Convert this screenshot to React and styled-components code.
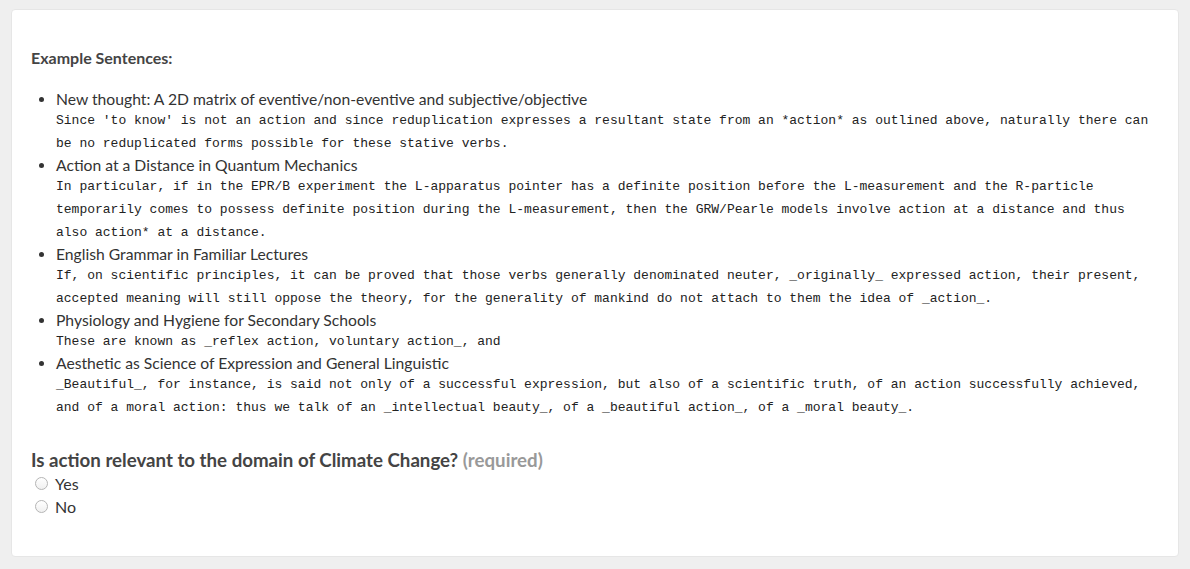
import React from "react";
import styled, { createGlobalStyle } from "styled-components";

const Global = createGlobalStyle`
  html, body { margin: 0; padding: 0; }
  body {
    background: #efefef;
    font-family: Lato, "Open Sans", sans-serif;
    color: #333;
  }
`;

const Page = styled.div`
  padding: 9px 11px 11px 11px;
`;

const Card = styled.section`
  background: #fff;
  border: 1px solid #e6e6e6;
  border-radius: 4px;
  padding: 38px 19px 38px 19px;
`;

const Heading = styled.h4`
  margin: 0 0 21px 0;
  font-size: 16px;
  line-height: 20px;
  font-weight: 700;
  color: #444;
`;

const List = styled.ul`
  margin: 0;
  padding: 0 0 0 25px;
  list-style: disc;
`;

const Item = styled.li`
  &::marker { color: #333; font-size: 15px; }
`;

const Title = styled.div`
  font-size: 15.7px;
  line-height: 20px;
  color: #333;
`;

const Sentence = styled.div`
  font-family: "Liberation Mono", "Courier New", monospace;
  font-size: 13px;
  line-height: 23px;
  color: #222;
`;

const Question = styled.div`
  margin-top: 29px;
  font-size: 18.7px;
  line-height: 24px;
  font-weight: 700;
  color: #444;
`;

const Required = styled.span`
  color: #999;
`;

const Option = styled.label`
  display: flex;
  align-items: center;
  gap: 7px;
  height: 23px;
  padding-left: 4px;
  font-size: 16px;
  color: #333;
`;

const Radio = styled.input.attrs({ type: "radio" })`
  appearance: none;
  margin: 0;
  width: 13px;
  height: 13px;
  border-radius: 50%;
  border: 1px solid #b5b5b5;
  background: linear-gradient(#fff, #f0f0f0);
  box-sizing: border-box;
`;

const items = [
  {
    title: "New thought: A 2D matrix of eventive/non-eventive and subjective/objective",
    text: "Since 'to know' is not an action and since reduplication expresses a resultant state from an *action* as outlined above, naturally there can be no reduplicated forms possible for these stative verbs.",
  },
  {
    title: "Action at a Distance in Quantum Mechanics",
    text: "In particular, if in the EPR/B experiment the L-apparatus pointer has a definite position before the L-measurement and the R-particle temporarily comes to possess definite position during the L-measurement, then the GRW/Pearle models involve action at a distance and thus also action* at a distance.",
  },
  {
    title: "English Grammar in Familiar Lectures",
    text: "If, on scientific principles, it can be proved that those verbs generally denominated neuter, _originally_ expressed action, their present, accepted meaning will still oppose the theory, for the generality of mankind do not attach to them the idea of _action_.",
  },
  {
    title: "Physiology and Hygiene for Secondary Schools",
    text: "These are known as _reflex action, voluntary action_, and",
  },
  {
    title: "Aesthetic as Science of Expression and General Linguistic",
    text: "_Beautiful_, for instance, is said not only of a successful expression, but also of a scientific truth, of an action successfully achieved, and of a moral action: thus we talk of an _intellectual beauty_, of a _beautiful action_, of a _moral beauty_.",
  },
];

export default function App() {
  return (
    <>
      <Global />
      <Page>
        <Card>
          <Heading>Example Sentences:</Heading>
          <List>
            {items.map((it) => (
              <Item key={it.title}>
                <Title>{it.title}</Title>
                <Sentence>{it.text}</Sentence>
              </Item>
            ))}
          </List>
          <Question>
            Is action relevant to the domain of Climate Change? <Required>(required)</Required>
          </Question>
          <Option>
            <Radio name="relevant" value="yes" />
            Yes
          </Option>
          <Option>
            <Radio name="relevant" value="no" />
            No
          </Option>
        </Card>
      </Page>
    </>
  );
}
